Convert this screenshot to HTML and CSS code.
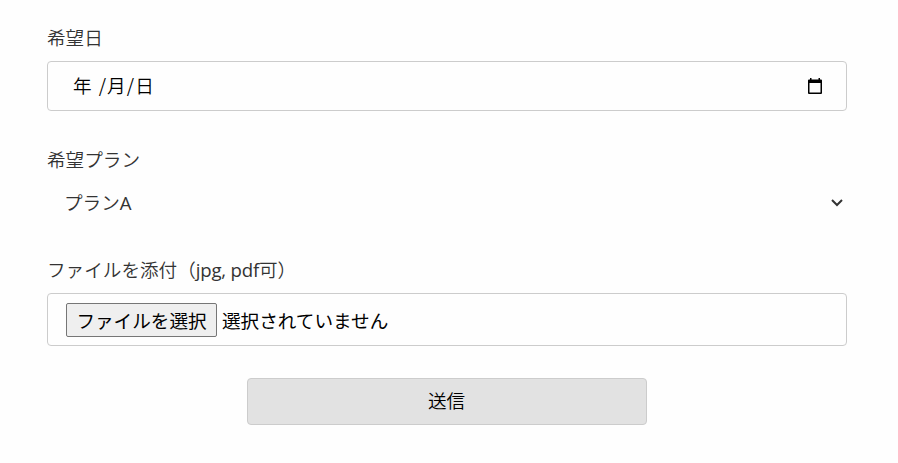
FILE: index.html
```html
<!DOCTYPE html>
<html lang="ja">
<head>
  <meta charset="UTF-8">
  <meta name="viewport" content="width=device-width, initial-scale=1.0">
  <title>お申し込みフォーム</title>
  <link rel="stylesheet" href="styles.css">
</head>
<body>

<form class="form" onsubmit="return false">
  <!-- 希望日 -->
  <div class="form-group">
    <div class="form-label" id="dateLabel">希望日</div>
    <div class="form-control date-control" role="group" aria-labelledby="dateLabel">
      <div class="date-text">
        <span class="date-year">年</span><span class="date-slash">/</span><span>月</span><span class="date-slash">/</span><span>日</span>
      </div>
      <svg class="date-icon" width="16" height="17" viewBox="0 0 16 17" aria-hidden="true">
        <path fill="#000" fill-rule="evenodd" d="M3 0h1.500v1.500h7V0H13v1.500h1a1 1 0 0 1 1 1V15a1 1 0 0 1-1 1H2a1 1 0 0 1-1-1V2.500a1 1 0 0 1 1-1h1zM2.500 5v9.500h11V5z"/>
      </svg>
    </div>
  </div>

  <!-- 希望プラン -->
  <div class="form-group plan-group">
    <div class="form-label">希望プラン</div>
    <div class="select-control">
      <span class="select-text">プラン<span class="latin">A</span></span>
      <svg class="select-icon" width="12" height="8" viewBox="0 0 12 8" aria-hidden="true">
        <path fill="none" stroke="#333" stroke-width="2" d="M1 1l5 5 5-5"/>
      </svg>
    </div>
  </div>

  <!-- 添付ファイル -->
  <div class="form-group file-group">
    <div class="form-label">ファイルを添付（<span class="latin">jpg, pdf</span>可）</div>
    <div class="form-control file-control">
      <button type="button" class="file-button">ファイルを選択</button>
      <span class="file-name">選択されていません</span>
    </div>
  </div>

  <button type="submit" class="submit-button">送信</button>
</form>

</body>
</html>
```

FILE: styles.css
```css
* {
  box-sizing: border-box;
}

body {
  margin: 0;
  background-color: #fefefe;
  color: #333;
  font-family: "Noto Sans CJK JP", sans-serif;
  font-size: 18.6px;
  font-weight: 350;
  line-height: 28px;
}

.form {
  width: 800px;
  margin-left: 47px;
  padding-top: 23px;
}

.form-group {
  margin-bottom: 34px;
}

.form-label {
  height: 28px;
  margin-bottom: 10px;
  white-space: nowrap;
}

.form-control {
  display: flex;
  align-items: center;
  border: 1px solid #ccc;
  border-radius: 4px;
  background-color: #fefefe;
  color: #000;
}

.date-control {
  justify-content: space-between;
  height: 50px;
  padding: 0 23px 0 25px;
}

.date-text {
  display: flex;
  padding-bottom: 2px;
}

.date-year {
  margin-right: 6px;
}

.date-slash {
  width: 9.5px;
  text-align: center;
}

.plan-group {
  margin-bottom: 38px;
}

.plan-group .form-label {
  margin-bottom: 15px;
}

.select-control {
  display: flex;
  align-items: center;
  justify-content: space-between;
  height: 29px;
  padding: 0 4px 0 17px;
}

.select-text {
  padding-bottom: 1px;
}

.file-group {
  margin-bottom: 32px;
}

.latin {
  font-family: "Open Sans", sans-serif;
  font-weight: 400;
  letter-spacing: -0.2px;
}

.file-control {
  height: 53px;
  padding: 0 18px;
  font-weight: 400;
}

.file-button {
  width: 151px;
  height: 34px;
  margin-right: 5px;
  padding: 0;
  border: 1px solid #767676;
  border-radius: 2px;
  background-color: #efefef;
  color: #000;
  font: inherit;
}

.submit-button {
  display: block;
  width: 400px;
  height: 47px;
  margin: 0 auto;
  padding: 0 1px 3px 0;
  border: 1px solid #ccc;
  border-radius: 4px;
  background-color: #e2e2e2;
  color: #000;
  font: inherit;
}
```
